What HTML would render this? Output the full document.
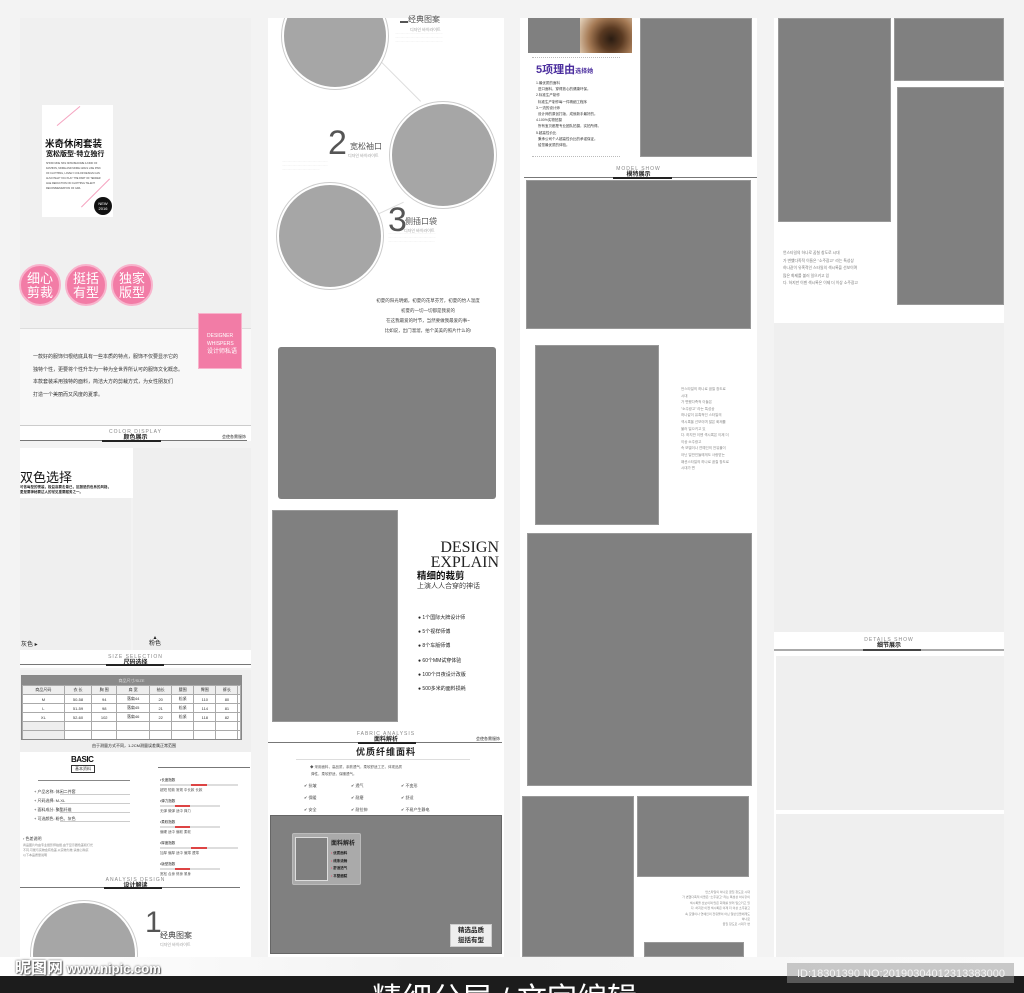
<!DOCTYPE html>
<html style="width:1024px;height:993px;overflow:hidden"><head><meta charset="utf-8">
<style>
*{margin:0;padding:0;box-sizing:border-box}
body{width:1024px;height:993px;overflow:hidden;background:#f3f3f3;position:relative;font-family:"Liberation Sans","Noto Sans CJK SC",sans-serif;color:#333}
.a{position:absolute}
.g{position:absolute;background:#808080}
.lg{position:absolute;background:#efefef}
.w{position:absolute;background:#fff}
.t{position:absolute;font-size:4px;line-height:6px;color:#777;white-space:nowrap}
.circ{position:absolute;border-radius:50%;background:#a6a6a6;border:2px solid #fff;box-shadow:0 0 0 1px #ccc}
.pk{position:absolute;width:42px;height:42px;border-radius:50%;background:#f27ca6;border:2px solid #f8b3cc;color:#fff;font-size:13px;line-height:14px;text-align:center;padding-top:6px}
.hd{position:absolute;text-align:center;font-size:5px;color:#888;letter-spacing:1px;line-height:6px}
.hd b{display:block;font-size:6px;color:#222;letter-spacing:0}
</style></head><body>
<!-- column 1 -->
<div class="lg" style="left:20px;top:18px;width:231px;height:310px;background:#f0f0f0"></div>
<div class="w" style="left:42px;top:105px;width:71px;height:112px"></div>
<div class="a" style="left:68px;top:101px;width:1px;height:30px;background:#f5a3c0;transform:rotate(50deg)"></div>
<div class="a" style="left:95px;top:173px;width:1px;height:40px;background:#f5a3c0;transform:rotate(45deg)"></div>
<div class="a" style="left:45px;top:136px;font-size:9.5px;color:#111;font-weight:bold">米奇休闲套装</div>
<div class="a" style="left:46px;top:149px;font-size:7px;color:#111;font-weight:bold">宽松版型·特立独行</div>
<div class="t" style="left:46px;top:161px;font-size:2.5px;line-height:5px;color:#444">SHOW MOE HAS NOW BECOME A KIND OF<br>FASHION, MORE AND MORE GIRLS LIKE PINK<br>OF CLOTHING, LOVELY COLOR DESIGN CAN<br>ALSO HELP YOU PLAY THE PART OF TENDER<br>AGE REDUCTION ON CLOTHING TALENT<br>RECOMMENDATION OF GIRL</div>
<div class="a" style="left:94px;top:197px;width:18px;height:18px;border-radius:50%;background:#111;color:#fff;font-size:4px;text-align:center;line-height:5px;padding-top:4px">NEW<br>2016</div>
<div class="pk" style="left:19px;top:264px">细心<br>剪裁</div>
<div class="pk" style="left:65px;top:264px">挺括<br>有型</div>
<div class="pk" style="left:111px;top:264px">独家<br>版型</div>
<div class="a" style="left:20px;top:328px;width:231px;height:97px;background:#f8f8f8;border-top:1px solid #ddd"></div>
<div class="a" style="left:198px;top:313px;width:44px;height:56px;background:#f27ca6;border:1px solid #f8b3cc;color:#fff;font-size:5px;line-height:8px;padding:18px 0 0 8px">DESIGNER<br>WHISPERS<br><span style="font-size:6px">设计师私语</span></div>
<div class="t" style="left:33px;top:351px;font-size:5px;line-height:12.6px;color:#333">一款好的服饰归根结底具有一些本质的特点，服饰不仅要显示它的<br>独特个性，更要将个性升华为一种为全世界所认可的服饰文化概念。<br>本款套装采用独特的面料，简洁大方的剪裁方式，为女性朋友们<br>打造一个美丽而又风度的夏季。</div>
<div class="w" style="left:20px;top:425px;width:231px;height:16px;border-top:1px solid #ccc"></div>
<div class="hd" style="left:20px;top:429px;width:231px">COLOR DISPLAY<b>颜色展示</b></div>
<div class="a" style="left:20px;top:440px;width:227px;height:1px;background:#777"></div>
<div class="a" style="left:102px;top:440px;width:59px;height:2px;background:#222"></div>
<div class="t" style="left:222px;top:434px;color:#333">会使各需服饰</div>
<div class="w" style="left:20px;top:448px;width:113px;height:50px"></div>
<div class="lg" style="left:20px;top:498px;width:111px;height:152px"></div>
<div class="lg" style="left:133px;top:448px;width:118px;height:202px"></div>
<div class="a" style="left:20px;top:467px;font-size:13px;color:#111">双色选择</div>
<div class="t" style="left:20px;top:485px;font-size:3.5px;line-height:5px;color:#222;font-weight:bold">可依每型的需装，极益高要击量已，区副是的色系的风格，<br>更是要神秘要达人的常见重要服务之一。</div>
<div class="a" style="left:21px;top:639px;font-size:6px;color:#222">灰色 ▸</div>
<div class="a" style="left:149px;top:635px;font-size:6px;color:#222;line-height:6px;text-align:center">▴<br>粉色</div>
<div class="w" style="left:20px;top:650px;width:231px;height:18px"></div>
<div class="hd" style="left:20px;top:654px;width:231px">SIZE SELECTION<b>尺码选择</b></div>
<div class="a" style="left:20px;top:664px;width:231px;height:1px;background:#777"></div>
<div class="a" style="left:106px;top:664px;width:58px;height:2px;background:#222"></div>
<div class="lg" style="left:20px;top:670px;width:231px;height:82px"></div>
<div class="a" style="left:21px;top:675px;width:221px;height:65px;background:#fff;border:1px solid #888;overflow:hidden">
<div style="background:#8a8a8a;height:9px;color:#ddd;font-size:4px;text-align:center;line-height:9px">商品尺寸/SIZE</div>
<table style="border-collapse:collapse;width:100%;font-size:4px;color:#333;text-align:center">
<tr style="height:9px;background:#eee"><td style="border:1px solid #aaa">商品尺码</td><td style="border:1px solid #aaa">衣 长</td><td style="border:1px solid #aaa">胸 围</td><td style="border:1px solid #aaa">肩 宽</td><td style="border:1px solid #aaa">袖长</td><td style="border:1px solid #aaa">腰围</td><td style="border:1px solid #aaa">臀围</td><td style="border:1px solid #aaa">裤长</td><td style="border:1px solid #aaa"></td></tr>
<tr style="height:9px"><td style="border:1px solid #aaa">M</td><td style="border:1px solid #aaa">50-58</td><td style="border:1px solid #aaa">94</td><td style="border:1px solid #aaa">落肩44</td><td style="border:1px solid #aaa">20</td><td style="border:1px solid #aaa">松紧</td><td style="border:1px solid #aaa">110</td><td style="border:1px solid #aaa">80</td><td style="border:1px solid #aaa"></td></tr>
<tr style="height:9px"><td style="border:1px solid #aaa">L</td><td style="border:1px solid #aaa">51-59</td><td style="border:1px solid #aaa">98</td><td style="border:1px solid #aaa">落肩45</td><td style="border:1px solid #aaa">21</td><td style="border:1px solid #aaa">松紧</td><td style="border:1px solid #aaa">114</td><td style="border:1px solid #aaa">81</td><td style="border:1px solid #aaa"></td></tr>
<tr style="height:9px"><td style="border:1px solid #aaa">XL</td><td style="border:1px solid #aaa">52-60</td><td style="border:1px solid #aaa">102</td><td style="border:1px solid #aaa">落肩46</td><td style="border:1px solid #aaa">22</td><td style="border:1px solid #aaa">松紧</td><td style="border:1px solid #aaa">118</td><td style="border:1px solid #aaa">82</td><td style="border:1px solid #aaa"></td></tr>
<tr style="height:9px"><td style="border:1px solid #aaa;background:#eee"></td><td style="border:1px solid #aaa"></td><td style="border:1px solid #aaa"></td><td style="border:1px solid #aaa"></td><td style="border:1px solid #aaa"></td><td style="border:1px solid #aaa"></td><td style="border:1px solid #aaa"></td><td style="border:1px solid #aaa"></td><td style="border:1px solid #aaa"></td></tr>
<tr style="height:9px"><td style="border:1px solid #aaa;background:#eee"></td><td style="border:1px solid #aaa"></td><td style="border:1px solid #aaa"></td><td style="border:1px solid #aaa"></td><td style="border:1px solid #aaa"></td><td style="border:1px solid #aaa"></td><td style="border:1px solid #aaa"></td><td style="border:1px solid #aaa"></td><td style="border:1px solid #aaa"></td></tr>
</table></div>
<div class="t" style="left:92px;top:743px;color:#222">由于测量方式不同，1-2CM测量误差属正常范围</div>
<div class="w" style="left:20px;top:752px;width:231px;height:205px"></div>
<div class="a" style="left:71px;top:755px;font-size:8px;font-weight:bold;color:#111;letter-spacing:-0.5px">BASIC</div>
<div class="a" style="left:71px;top:765px;font-size:4px;border:1px solid #333;padding:0 3px;color:#333">基本资料</div>
<div class="a" style="left:38px;top:780px;width:92px;height:1px;background:#888"></div>
<div class="t" style="left:34px;top:787px;font-size:4px;line-height:9px;color:#333">+ 产品名称: 休闲二件套<br>+ 尺码选择: M-XL<br>+ 面料成分: 聚酯纤维<br>+ 可选颜色: 粉色、灰色</div>
<div class="a" style="left:60px;top:794px;width:70px;height:1px;background:#ccc;box-shadow:0 9px 0 #ccc,0 18px 0 #ccc,0 27px 0 #ccc"></div>
<div class="t" style="left:23px;top:836px;font-size:4px;color:#333">› 色差说明</div>
<div class="t" style="left:23px;top:843px;font-size:3px;line-height:5px;color:#888">商品图片均由专业摄影师拍摄,由于显示器色差和灯光<br>不同,可能与实物会有色差,以实物为准,请放心购买<br>以下本品质量说明</div>
<div class="a" style="left:158px;top:767px;width:92px;height:1px;background:#777"></div>
<div class="a" style="left:160px;top:777px;width:78px">
<div class="t" style="position:relative;font-size:3.5px;color:#222">•长度指数</div><div style="height:2px;margin:1px 0;background:linear-gradient(90deg,#ddd 40%,#d44 40%,#d44 60%,#ddd 60%)"></div><div class="t" style="position:relative;font-size:3.5px;color:#555">超短 短款 常规 中长款 长款</div>
<div class="t" style="position:relative;font-size:3.5px;color:#222;margin-top:5px">•弹力指数</div><div style="height:2px;margin:1px 0;width:60px;background:linear-gradient(90deg,#ddd 25%,#d44 25%,#d44 50%,#ddd 50%)"></div><div class="t" style="position:relative;font-size:3.5px;color:#555">无弹 微弹 适中 弹力</div>
<div class="t" style="position:relative;font-size:3.5px;color:#222;margin-top:5px">•柔软指数</div><div style="height:2px;margin:1px 0;width:60px;background:linear-gradient(90deg,#ddd 25%,#d44 25%,#d44 50%,#ddd 50%)"></div><div class="t" style="position:relative;font-size:3.5px;color:#555">偏硬 适中 偏软 柔软</div>
<div class="t" style="position:relative;font-size:3.5px;color:#222;margin-top:5px">•厚度指数</div><div style="height:2px;margin:1px 0;background:linear-gradient(90deg,#ddd 40%,#d44 40%,#d44 60%,#ddd 60%)"></div><div class="t" style="position:relative;font-size:3.5px;color:#555">加厚 偏厚 适中 偏薄 透薄</div>
<div class="t" style="position:relative;font-size:3.5px;color:#222;margin-top:5px">•版型指数</div><div style="height:2px;margin:1px 0;width:60px;background:linear-gradient(90deg,#ddd 25%,#d44 25%,#d44 50%,#ddd 50%)"></div><div class="t" style="position:relative;font-size:3.5px;color:#555">宽松 合身 修身 紧身</div>
</div>
<div class="hd" style="left:20px;top:877px;width:231px">ANALYSIS DESIGN<b>设计解读</b></div>
<div class="a" style="left:20px;top:887px;width:220px;height:1px;background:#777"></div>
<div class="a" style="left:104px;top:887px;width:58px;height:2px;background:#222"></div>
<div class="a" style="left:20px;top:890px;width:231px;height:67px;overflow:hidden">
<div class="circ" style="left:11px;top:11px;width:106px;height:106px"></div>
<div class="a" style="left:125px;top:18px;font-size:30px;color:#555;line-height:30px">1</div>
<div class="a" style="left:140px;top:40px;font-size:8px;color:#444">经典图案</div>
<div class="t" style="left:140px;top:52px;color:#999">디자인 바이라이트</div>
</div>
<!-- column 2 -->
<div class="w" style="left:268px;top:18px;width:236px;height:939px"></div>
<div class="a" style="left:268px;top:18px;width:236px;height:280px;overflow:hidden">
<div class="a" style="left:112px;top:42px;width:58px;height:1px;background:#ddd;transform:rotate(45deg);transform-origin:0 0"></div>
<div class="a" style="left:107px;top:190px;width:30px;height:1px;background:#ddd;transform:rotate(-25deg)"></div>
<div class="circ" style="left:14px;top:-35px;width:106px;height:106px"></div>
<div class="circ" style="left:122px;top:84px;width:106px;height:106px"></div>
<div class="circ" style="left:9px;top:165px;width:106px;height:106px"></div>
</div>
<div class="a" style="left:400px;top:14px;font-size:8px;color:#555">▂经典图案</div>
<div class="t" style="left:410px;top:27px;color:#999">디자인 바이라이트</div>
<div class="t" style="left:395px;top:32px;font-size:2.5px;line-height:4px;color:#aaa">·························································<br>·························································<br>·························································</div>
<div class="a" style="left:328px;top:126px;font-size:34px;color:#555;line-height:34px">2</div>
<div class="a" style="left:350px;top:141px;font-size:8px;color:#555">宽松袖口</div>
<div class="t" style="left:348px;top:153px;color:#999">디자인 바이라이트</div>
<div class="t" style="left:282px;top:160px;font-size:2.5px;line-height:4px;color:#aaa">·······················································<br>·······················································<br>·············································</div>
<div class="a" style="left:388px;top:203px;font-size:34px;color:#555;line-height:34px">3</div>
<div class="a" style="left:405px;top:216px;font-size:8px;color:#555">侧插口袋</div>
<div class="t" style="left:404px;top:228px;color:#999">디자인 바이라이트</div>
<div class="t" style="left:388px;top:232px;font-size:2.5px;line-height:4px;color:#aaa">·························································<br>·························································<br>························································</div>
<div class="t" style="left:372px;top:296px;font-size:4.5px;line-height:10px;color:#444;text-align:center;width:112px">初夏的阳光明媚，初夏的花草芬芳，初夏的怡人温度<br>初夏的一切一切都是我爱的<br>在这我最爱的时节，当然要做我最爱的事~<br>比如说，出门溜溜，拍个美美的照片什么的!</div>
<div class="g" style="left:278px;top:347px;width:218px;height:152px;border-radius:3px"></div>
<div class="g" style="left:272px;top:510px;width:126px;height:212px;border:1px solid #999"></div>
<div class="a" style="left:418px;top:540px;font-family:'Liberation Serif',serif;font-size:16px;line-height:15px;color:#222;text-align:right;width:81px">DESIGN<br>EXPLAIN</div>
<div class="a" style="left:417px;top:572px;font-size:9.5px;font-weight:bold;color:#111;line-height:10px">精细的裁剪</div>
<div class="a" style="left:417px;top:583px;font-size:7px;color:#444;line-height:8px">上演人人合穿的神话</div>
<div class="a" style="left:418px;top:611px;font-size:5px;color:#222;line-height:14.2px">● 1个国际大牌设计师<br>● 5个视样师傅<br>● 8个车版师傅<br>● 60个MM试穿体验<br>● 100个日夜设计改版<br>● 500多米的面料损耗</div>
<div class="hd" style="left:268px;top:731px;width:236px">FABRIC ANALYSIS<b>面料解析</b></div>
<div class="a" style="left:268px;top:742px;width:234px;height:1px;background:#777"></div>
<div class="a" style="left:358px;top:742px;width:58px;height:2px;background:#222"></div>
<div class="t" style="left:476px;top:736px;color:#333">会使各需服饰</div>
<div class="a" style="left:356px;top:745px;font-size:9px;font-weight:bold;color:#222;letter-spacing:1px">优质纤维面料</div>
<div class="a" style="left:296px;top:759px;width:174px;height:1px;background:#ddd"></div>
<div class="t" style="left:310px;top:764px;font-size:3.5px;line-height:7px;color:#555">◆ 采用面料，高品质，亲肤透气，柔软舒适工艺，体现品质<br>&nbsp;弹性，柔软舒适，保暖透气。</div>
<div class="t" style="left:304px;top:780px;font-size:4px;line-height:12px;color:#444">✔ 抗皱<br>✔ 保暖<br>✔ 安全</div>
<div class="t" style="left:351px;top:780px;font-size:4px;line-height:12px;color:#444">✔ 透气<br>✔ 耐磨<br>✔ 耐拉伸</div>
<div class="t" style="left:401px;top:780px;font-size:4px;line-height:12px;color:#444">✔ 不变形<br>✔ 舒适<br>✔ 不易产生静电</div>
<div class="g" style="left:270px;top:815px;width:232px;height:139px;border:1px solid #666"></div>
<div class="a" style="left:292px;top:833px;width:69px;height:52px;background:#aaa;border-radius:2px;border:1px solid #bbb"></div>
<div class="g" style="left:295px;top:837px;width:33px;height:44px;border:1px solid #ddd"></div>
<div class="a" style="left:331px;top:841px;font-size:6px;font-weight:bold;color:#222;line-height:7px">面料解析</div>
<div class="t" style="left:331px;top:850px;font-size:3.5px;line-height:7.5px;color:#111;font-weight:bold"><span style="color:#e46">•</span> 优质面料<br><span style="color:#e46">•</span> 线条流畅<br><span style="color:#e46">•</span> 舒适透气<br><span style="color:#e46">•</span> 平整细腻</div>
<div class="a" style="left:450px;top:924px;width:42px;height:23px;background:#eee;border:1px solid #ccc;font-size:6.5px;font-weight:bold;color:#222;text-align:center;line-height:10px;padding-top:1px">精选品质<br>挺括有型</div>
<!-- column 3 -->
<div class="w" style="left:520px;top:18px;width:237px;height:939px"></div>
<div class="g" style="left:528px;top:18px;width:52px;height:35px"></div>
<div class="a" style="left:580px;top:18px;width:52px;height:35px;background:radial-gradient(circle at 60% 60%,#2a1c12 0,#5a3a22 30%,#a57a55 60%,#e8d8c2 100%)"></div>
<div class="g" style="left:640px;top:18px;width:112px;height:139px;border:1px solid #999"></div>
<div class="a" style="left:532px;top:57px;width:88px;border-top:1px dotted #bbb"></div>
<div class="a" style="left:536px;top:63px;font-size:11px;font-weight:bold;color:#4b2e9e;line-height:14px">5项理由<span style="font-size:6px">选择她</span></div>
<div class="t" style="left:536px;top:80px;font-size:3.5px;line-height:6.2px;color:#333">1.最优质的面料<br>&nbsp; 进口面料，穿得放心的健康环保。<br>2.标准生产制作<br>&nbsp; 标准生产制作每一件精细工程序<br>3.一流的设计师<br>&nbsp; 设计师的原创打版，成就新手最好的。<br>4.100%实物拍摄<br>&nbsp; 所有宝贝都是专业团队拍摄，实拍所得。<br>5.超高性价比<br>&nbsp; 秉承公司个人超高性价比的承诺保证。<br>&nbsp; 给您最优质的体验。</div>
<div class="a" style="left:532px;top:156px;width:88px;border-top:1px dotted #bbb"></div>
<div class="hd" style="left:520px;top:166px;width:237px">MODEL SHOW<b>模特展示</b></div>
<div class="a" style="left:524px;top:177px;width:233px;height:1px;background:#777"></div>
<div class="a" style="left:613px;top:177px;width:59px;height:2px;background:#222"></div>
<div class="g" style="left:526px;top:180px;width:225px;height:149px;border:1px solid #999"></div>
<div class="g" style="left:535px;top:345px;width:124px;height:180px;border:1px solid #999"></div>
<div class="t" style="left:681px;top:386px;font-size:3.5px;line-height:6.6px;color:#888">언스타일의 하나로 꿈칠 창도로<br>시대<br>가 변했다족적 이들은<br>"소주광고" 라는 특성상<br>하나같이 유혹적인 스타일의<br>섹시록을 선보이며 많은 화제를<br>불러 일으키고 있<br>다. 하지만 이젠 섹시록은 이제 더<br>이상 소주광고<br>속 모델이나 연예인의 전유물이<br>아닌 일반인들에게도 사랑받는<br>패션스타일의 하나로 꿈칠 창도로<br>시대가 변</div>
<div class="g" style="left:527px;top:533px;width:225px;height:253px;border:1px solid #999"></div>
<div class="g" style="left:522px;top:796px;width:112px;height:161px;border:1px solid #999"></div>
<div class="g" style="left:637px;top:796px;width:112px;height:81px;border:1px solid #999"></div>
<div class="t" style="left:644px;top:890px;font-size:3px;line-height:5.4px;color:#888;text-align:right;width:106px">언스타일의 하나로 꿈칠 창도로 시대<br>가 변했다족적 이들은 "소주광고" 라는 특성상 하나같이<br>섹시록을 선보이며 많은 화제를 불러 일으키고 있<br>다. 하지만 이젠 섹시록은 이제 더 이상 소주광고<br>속 모델이나 연예인의 전유물이 아닌 일반인들에게도<br>하나로<br>꿈칠 창도로 시대가 변</div>
<div class="g" style="left:644px;top:942px;width:100px;height:15px;border:1px solid #999"></div>
<!-- column 4 -->
<div class="w" style="left:774px;top:18px;width:230px;height:305px"></div>
<div class="g" style="left:778px;top:18px;width:113px;height:204px;border:1px solid #999"></div>
<div class="g" style="left:894px;top:18px;width:110px;height:63px;border:1px solid #999"></div>
<div class="g" style="left:897px;top:87px;width:107px;height:218px;border:1px solid #999"></div>
<div class="t" style="left:783px;top:250px;font-size:3.8px;line-height:7.6px;color:#777">언스타일의 하나로 꿈칠 창도로 시대<br>가 변했다족적 이들은 "소주광고" 라는 특성상<br>하나같이 유혹적인 스타일의 섹시록을 선보이며<br>많은 화제를 불러 일으키고 있<br>다. 하지만 이젠 섹시록은 이제 더 이상 소주광고</div>
<div class="lg" style="left:774px;top:323px;width:230px;height:309px"></div>
<div class="w" style="left:774px;top:632px;width:230px;height:19px"></div>
<div class="hd" style="left:774px;top:637px;width:230px">DETAILS SHOW<b>细节展示</b></div>
<div class="a" style="left:774px;top:649px;width:230px;height:2px;background:#aaa"></div>
<div class="a" style="left:863px;top:649px;width:58px;height:2px;background:#444"></div>
<div class="w" style="left:774px;top:651px;width:230px;height:306px"></div>
<div class="lg" style="left:776px;top:656px;width:228px;height:154px"></div>
<div class="lg" style="left:776px;top:814px;width:228px;height:143px"></div>
<!-- bottom -->
<div class="a" style="left:0;top:957px;width:1024px;height:19px;background:linear-gradient(90deg,#fff,#f3f3f3 40%,#fafafa)"></div>
<div class="a" style="left:15px;top:960px;font-size:16px;font-weight:bold;color:#fff;text-shadow:0 0 2px #555,1px 1px 1px #666;line-height:18px;white-space:nowrap">昵图网<span style="font-size:13px"> www.nipic.com</span></div>
<div class="a" style="left:0;top:976px;width:1024px;height:17px;background:#1c1c1c;overflow:hidden">
<div class="a" style="left:372px;top:8px;font-size:30px;color:#fff;line-height:32px;white-space:nowrap">精细分层 / 文字编辑</div></div>
<div class="a" style="left:787px;top:963px;width:227px;height:20px;background:rgba(150,150,150,0.5);color:#f4f4f4;font-size:11px;line-height:22px;padding-left:10px;overflow:hidden;white-space:nowrap">ID:18301390 NO:20190304012313383000</div>
</body></html>
